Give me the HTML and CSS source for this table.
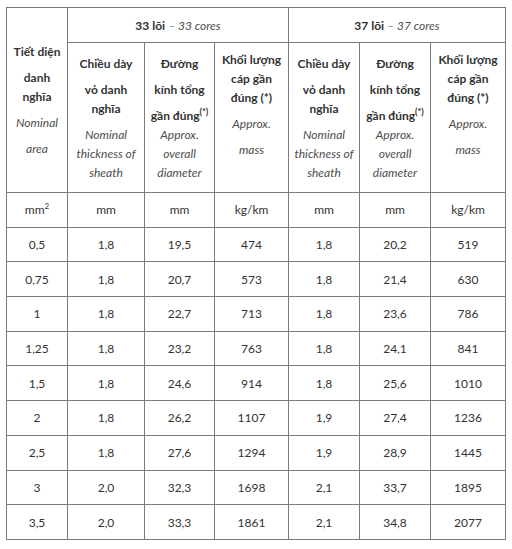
FILE: index.html
```html
<!DOCTYPE html>
<html lang="vi">
<head>
<meta charset="utf-8">
<title>Bảng thông số cáp</title>
<link rel="stylesheet" href="styles.css">
</head>
<body>
<table class="spec">
  <colgroup>
    <col class="c1"><col class="c2"><col class="c3"><col class="c4">
    <col class="c5"><col class="c6"><col class="c7">
  </colgroup>
  <thead>
    <tr class="group">
      <th rowspan="2" class="area">
        <span class="ln b">Tiết diện</span>
        <span class="ln b gap">danh</span>
        <span class="ln b">nghĩa</span>
        <span class="ln it gap">Nominal</span>
        <span class="ln it gap">area</span>
      </th>
      <th colspan="3" class="title"><b>33 lõi</b> <i>– 33 cores</i></th>
      <th colspan="3" class="title"><b>37 lõi</b> <i>– 37 cores</i></th>
    </tr>
    <tr class="sub">
      <th>
        <span class="ln b">Chiều dày</span>
        <span class="ln b gap">vỏ danh</span>
        <span class="ln b">nghĩa</span>
        <span class="ln it gap">Nominal</span>
        <span class="ln it">thickness of</span>
        <span class="ln it">sheath</span>
      </th>
      <th>
        <span class="ln b">Đường</span>
        <span class="ln b gap">kính tổng</span>
        <span class="ln b gap">gần đúng<sup>(*)</sup></span>
        <span class="ln it">Approx.</span>
        <span class="ln it">overall</span>
        <span class="ln it">diameter</span>
      </th>
      <th>
        <span class="ln b">Khối lượng</span>
        <span class="ln b">cáp gần</span>
        <span class="ln b">đúng (*)</span>
        <span class="ln it gap">Approx.</span>
        <span class="ln it gap trail">mass</span>
      </th>
      <th>
        <span class="ln b">Chiều dày</span>
        <span class="ln b gap">vỏ danh</span>
        <span class="ln b">nghĩa</span>
        <span class="ln it gap">Nominal</span>
        <span class="ln it">thickness of</span>
        <span class="ln it">sheath</span>
      </th>
      <th>
        <span class="ln b">Đường</span>
        <span class="ln b gap">kính tổng</span>
        <span class="ln b gap">gần đúng<sup>(*)</sup></span>
        <span class="ln it">Approx.</span>
        <span class="ln it">overall</span>
        <span class="ln it">diameter</span>
      </th>
      <th>
        <span class="ln b">Khối lượng</span>
        <span class="ln b">cáp gần</span>
        <span class="ln b">đúng (*)</span>
        <span class="ln it gap">Approx.</span>
        <span class="ln it gap trail">mass</span>
      </th>
    </tr>
  </thead>
  <tbody class="data">
    <tr><td>mm<sup>2</sup></td><td>mm</td><td>mm</td><td>kg/km</td><td>mm</td><td>mm</td><td>kg/km</td></tr>
    <tr><td>0,5</td><td>1,8</td><td>19,5</td><td>474</td><td>1,8</td><td>20,2</td><td>519</td></tr>
    <tr><td>0,75</td><td>1,8</td><td>20,7</td><td>573</td><td>1,8</td><td>21,4</td><td>630</td></tr>
    <tr><td>1</td><td>1,8</td><td>22,7</td><td>713</td><td>1,8</td><td>23,6</td><td>786</td></tr>
    <tr><td>1,25</td><td>1,8</td><td>23,2</td><td>763</td><td>1,8</td><td>24,1</td><td>841</td></tr>
    <tr><td>1,5</td><td>1,8</td><td>24,6</td><td>914</td><td>1,8</td><td>25,6</td><td>1010</td></tr>
    <tr><td>2</td><td>1,8</td><td>26,2</td><td>1107</td><td>1,9</td><td>27,4</td><td>1236</td></tr>
    <tr><td>2,5</td><td>1,8</td><td>27,6</td><td>1294</td><td>1,9</td><td>28,9</td><td>1445</td></tr>
    <tr><td>3</td><td>2,0</td><td>32,3</td><td>1698</td><td>2,1</td><td>33,7</td><td>1895</td></tr>
    <tr><td>3,5</td><td>2,0</td><td>33,3</td><td>1861</td><td>2,1</td><td>34,8</td><td>2077</td></tr>
  </tbody>
</table>
</body>
</html>
```

FILE: styles.css
```css
html, body {
  margin: 0;
  padding: 0;
  background: #ffffff;
}

body {
  font-family: Lato, "Noto Sans", "DejaVu Sans", sans-serif;
  font-size: 12px;
  color: #333333;
}

.spec {
  margin: 7px 0 0 6px;
  width: 499px;
  table-layout: fixed;
  border-collapse: collapse;
}

.c1 { width: 61px; }
.c2 { width: 77px; }
.c3 { width: 70px; }
.c4 { width: 74px; }
.c5 { width: 71px; }
.c6 { width: 71px; }
.c7 { width: 75px; }

.spec th,
.spec td {
  border: 1px solid #7b7b7b;
  padding: 0;
  text-align: center;
  font-weight: normal;
}

.group .title {
  height: 34px;
  line-height: 19px;
}

.title b {
  font-weight: 700;
  color: #333333;
}

.title i {
  color: #4d4d4d;
}

.sub th {
  height: 149px;
  vertical-align: middle;
}

.area {
  vertical-align: middle;
}

.ln {
  display: block;
  line-height: 19px;
  white-space: nowrap;
}

.ln.gap {
  margin-top: 7px;
}

.ln.trail {
  margin-bottom: 26px;
}

.ln.b {
  font-weight: 700;
  color: #333333;
}

.ln.it {
  font-style: italic;
  color: #4d4d4d;
}

.ln sup {
  font-size: 9px;
  line-height: 0;
  vertical-align: 5px;
}

.data td {
  height: 33.7px;
  line-height: 19px;
  color: #333333;
}

.data sup {
  font-size: 8px;
  line-height: 0;
  vertical-align: 5px;
}
```
